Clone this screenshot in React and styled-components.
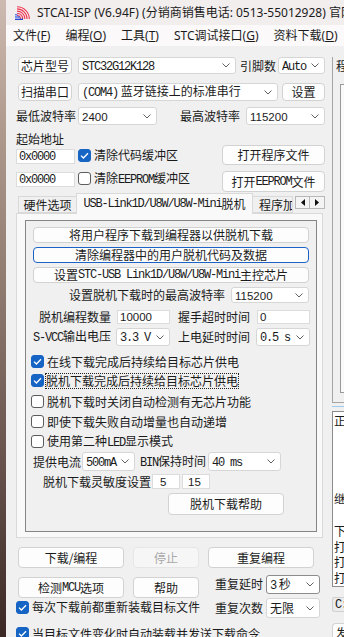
import React from "react";
import styled, { createGlobalStyle } from "styled-components";

const UI = `"Noto Sans", "Noto Sans CJK SC", sans-serif`;
const CJK = `"Noto Sans CJK SC", "Noto Sans", sans-serif`;

const GlobalStyle = createGlobalStyle`
  html, body { margin: 0; padding: 0; }
  body { background: #3a2a26; font-family: ${CJK}; font-size: 12px; color: #1b1b1b; }
  #root { width: 344px; height: 637px; overflow: hidden; }
`;

const Screen = styled.div`
  display: flex;
  width: 344px;
  height: 637px;
  overflow: hidden;
`;

const Desktop = styled.div`
  flex: none;
  width: 6px;
  background: linear-gradient(180deg, #cdbab0 0%, #b09a8e 20%, #8f7a70 45%, #6b5650 70%, #3b2824 100%);
`;

const Win = styled.div`
  flex: 1;
  min-width: 0;
  display: flex;
  flex-direction: column;
  background: #f0f0f0;
  overflow: hidden;
`;

const TitleBar = styled.div`
  flex: none;
  height: 25px;
  display: flex;
  align-items: center;
  gap: 6px;
  padding-left: 8px;
  background: #f3eeee;
  white-space: nowrap;
  overflow: hidden;
  font: 12px/1 ${UI};
  color: #1b1b1b;
`;

const MenuBar = styled.div`
  flex: none;
  height: 21px;
  display: flex;
  align-items: center;
  gap: 15px;
  padding-left: 7px;
  background: #fbf9f9;
  white-space: nowrap;
  overflow: hidden;
  font: 12px/1 ${UI};
  color: #1b1b1b;
`;

const MenuItem = styled.span`
  flex: none;
`;

const Body = styled.div`
  flex: 1;
  display: flex;
  min-height: 0;
`;

const Left = styled.div`
  flex: none;
  width: 326px;
  box-sizing: border-box;
  padding: 0 7px 0 10px;
  display: flex;
  flex-direction: column;
`;

const Right = styled.div`
  flex: 1;
  min-width: 0;
  display: flex;
  flex-direction: column;
  overflow: hidden;
`;

const Row = styled.div`
  flex: none;
  display: flex;
  align-items: ${(p) => p.$align || "center"};
  height: ${(p) => p.$h}px;
  margin-top: ${(p) => p.$mt || 0}px;
`;

const Label = styled.span`
  flex: none;
  font: 12px/14px ${CJK};
  color: #1b1b1b;
  white-space: nowrap;
  margin-left: ${(p) => p.$ml || 0}px;
  margin-top: ${(p) => p.$mt || 0}px;
  width: ${(p) => (p.$w ? p.$w + "px" : "auto")};
  text-align: ${(p) => (p.$right ? "right" : "left")};
  ${(p) => (p.$dotted ? "outline: 1px dotted #222; outline-offset: 0px;" : "")}
`;

const M = styled.span`
  font-family: "Liberation Mono", monospace;
  font-size: 12px;
  letter-spacing: -1.2px;
`;

const N = styled.span`
  font-family: "Liberation Sans", sans-serif;
  font-size: 11.5px;
`;

const Btn = styled.button`
  box-sizing: border-box;
  flex: none;
  width: ${(p) => p.$w}px;
  height: ${(p) => p.$h || 17}px;
  margin: ${(p) => p.$mt || 0}px 0 0 ${(p) => p.$ml || 0}px;
  padding: 0;
  display: flex;
  align-items: center;
  justify-content: center;
  background: ${(p) => (p.disabled ? "#f6f6f6" : "#fdfdfd")};
  border: 1px solid ${(p) => (p.$focus ? "#1b63c6" : p.disabled ? "#e6e6e6" : "#d2d2d2")};
  border-radius: 4px;
  font: 12px/14px ${CJK};
  color: ${(p) => (p.disabled ? "#a8a8a8" : "#1b1b1b")};
  white-space: nowrap;
  overflow: hidden;
`;

const ComboBox = styled.div`
  box-sizing: border-box;
  flex: none;
  display: flex;
  align-items: center;
  width: ${(p) => p.$w}px;
  height: ${(p) => p.$h || 18}px;
  margin-left: ${(p) => p.$ml || 0}px;
  margin-top: ${(p) => p.$mt || 0}px;
  padding-left: 3px;
  background: #fff;
  border: 1px solid ${(p) => (p.$dark ? "#8c8c8c" : "#d6d6d6")};
  border-radius: 3px;
  font: 12px/14px ${CJK};
  color: #1b1b1b;
  white-space: nowrap;
  overflow: hidden;
`;

const ComboText = styled.span`
  flex: 1;
  min-width: 0;
  overflow: hidden;
`;

const ChevronSvg = styled.svg`
  flex: none;
  margin: 0 5px 0 2px;
`;

function Chevron() {
  return (
    <ChevronSvg width="8" height="5" viewBox="0 0 8 5">
      <path d="M.5 .5 4 4 7.5 .5" fill="none" stroke="#606060" strokeWidth="1" />
    </ChevronSvg>
  );
}

function Combo({ children, ...rest }) {
  return (
    <ComboBox {...rest}>
      <ComboText>{children}</ComboText>
      <Chevron />
    </ComboBox>
  );
}

const TextBox = styled.div`
  box-sizing: border-box;
  flex: none;
  display: flex;
  align-items: center;
  width: ${(p) => p.$w}px;
  height: ${(p) => p.$h || 15}px;
  margin-left: ${(p) => p.$ml || 0}px;
  margin-top: ${(p) => p.$mt || 0}px;
  padding-left: ${(p) => (p.$pl != null ? p.$pl : 2)}px;
  background: #fff;
  border: 1px solid #dcdcdc;
  font: 12px/14px ${CJK};
  color: #1b1b1b;
  white-space: nowrap;
  overflow: hidden;
`;

const CheckBox = styled.span`
  box-sizing: border-box;
  flex: none;
  width: 13px;
  height: 13px;
  margin-left: ${(p) => p.$ml || 0}px;
  margin-top: ${(p) => p.$mt || 0}px;
  border-radius: 3px;
  display: flex;
  align-items: center;
  justify-content: center;
  background: ${(p) => (p.$on ? "#1664c4" : "#fff")};
  border: 1px solid ${(p) => (p.$on ? "#1664c4" : "#5c5c5c")};
`;

function Check({ on, ...rest }) {
  return (
    <CheckBox $on={on} {...rest}>
      {on && (
        <svg width="9" height="7" viewBox="0 0 9 7">
          <path d="M1 3.6 3.4 6 8 1.2" fill="none" stroke="#fff" strokeWidth="1.3" />
        </svg>
      )}
    </CheckBox>
  );
}

const TabStrip = styled.div`
  flex: none;
  display: flex;
  align-items: flex-end;
  height: 20px;
  margin-top: 1px;
`;

const Tab = styled.div`
  box-sizing: border-box;
  flex: none;
  width: ${(p) => p.$w}px;
  height: ${(p) => (p.$active ? 21 : 17)}px;
  margin-left: ${(p) => p.$ml || 0}px;
  margin-bottom: ${(p) => (p.$active ? -1 : 0)}px;
  display: flex;
  align-items: center;
  justify-content: ${(p) => (p.$left ? "flex-start" : "center")};
  padding-left: ${(p) => (p.$left ? 6 : 0)}px;
  padding-bottom: ${(p) => (p.$active ? 1 : 0)}px;
  background: ${(p) => (p.$active ? "#f9f9f9" : "#f0f0f0")};
  border: 1px solid #d9d9d9;
  border-bottom: ${(p) => (p.$active ? "none" : "1px solid #d9d9d9")};
  font: 12px/14px ${CJK};
  color: #1b1b1b;
  white-space: nowrap;
  overflow: hidden;
  position: relative;
  z-index: ${(p) => (p.$active ? 1 : 0)};
`;

const ScrollPair = styled.div`
  flex: none;
  display: flex;
  margin-left: auto;
  align-self: flex-start;
  margin-top: 3px;
`;

const ScrollBtn = styled.div`
  box-sizing: border-box;
  width: 15px;
  height: 13px;
  display: flex;
  align-items: center;
  justify-content: center;
  background: #f4f4f4;
  border: 1px solid #b8b8b8;
  & + & {
    border-left: none;
  }
`;

const Panel = styled.div`
  box-sizing: border-box;
  flex: none;
  display: flex;
  width: 307px;
  height: 325px;
  padding: 6px 5px 5px 8px;
  background: #f9f9f9;
  border: 1px solid #d9d9d9;
`;

const Group = styled.div`
  box-sizing: border-box;
  flex: 1;
  display: flex;
  flex-direction: column;
  background: #f0f0f0;
  border: 1px solid #858585;
`;

const Frame = styled.div`
  box-sizing: border-box;
  flex: none;
  height: 346px;
  margin-top: 11px;
  display: flex;
  flex-direction: column;
  border-left: 1px solid #a5a5a5;
  border-bottom: 1px solid #a5a5a5;
`;

const FrameLabel = styled.span`
  font: 12px/14px ${CJK};
  margin: 2px 0 0 3px;
  white-space: nowrap;
`;

const InnerBox = styled.div`
  flex: 1;
  margin: 11px 0 9px 7px;
  background: #fafafa;
  border: 1px solid #9a9a9a;
  border-right: none;
`;

const Splitter = styled.div`
  flex: none;
  height: 1px;
  margin-top: 3px;
  background: #9ccbf0;
`;

const LogArea = styled.div`
  box-sizing: border-box;
  flex: none;
  height: 176px;
  margin-top: 4px;
  padding: 1px 0 0 1px;
  background: #fff;
  border: 1px solid #8c8c8c;
  border-right: none;
  font: 12px/15.7px ${CJK};
  white-space: nowrap;
  overflow: hidden;
`;

const LogLine = styled.div`
  height: 15.7px;
`;

const PathBox = styled.div`
  box-sizing: border-box;
  flex: none;
  height: 15px;
  margin-top: 10px;
  padding-left: 2px;
  display: flex;
  align-items: center;
  background: #ececec;
  border: 1px solid #d0d0d0;
  border-right: none;
  border-radius: 3px 0 0 3px;
`;

const SideBtn = styled.div`
  box-sizing: border-box;
  flex: none;
  height: 20px;
  margin-top: 11px;
  padding-left: 3px;
  display: flex;
  align-items: center;
  background: #fdfdfd;
  border: 1px solid #d2d2d2;
  border-right: none;
  border-radius: 4px 0 0 4px;
  font: 12px/14px ${CJK};
  white-space: nowrap;
  overflow: hidden;
`;

const RightBlock = styled.div`
  flex: none;
  display: flex;
  align-items: ${(p) => p.$align || "center"};
  margin-left: auto;
  margin-right: 5px;
  align-self: stretch;
`;

function AppIcon() {
  return (
    <svg width="17" height="14" viewBox="0 0 17 14" style={{ flex: "none" }}>
      <g fill="none" stroke="#ee3a55" strokeWidth="1.1">
        <path d="M3 9.5 A3.5 3.5 0 0 1 6.5 13" />
        <path d="M3 7.3 A5.7 5.7 0 0 1 8.7 13" />
        <path d="M3 5.1 A7.9 7.9 0 0 1 10.9 13" />
        <path d="M3 2.9 A10.1 10.1 0 0 1 13.1 13" />
        <path d="M3 0.7 A12.3 12.3 0 0 1 15.3 13" />
      </g>
      <path d="M1 13.3 H9" stroke="#1a3fd0" strokeWidth="1.3" />
      <path d="M1 11 H6" stroke="#2a55e0" strokeWidth="1.2" />
      <path d="M1 8.8 H3.5" stroke="#2a55e0" strokeWidth="1.1" />
    </svg>
  );
}

function Tri({ dir }) {
  return (
    <svg width="4" height="7" viewBox="0 0 4 7">
      <path d={dir === "l" ? "M4 0 0 3.5 4 7Z" : "M0 0 4 3.5 0 7Z"} fill="#111" />
    </svg>
  );
}

const logLines = ["正", "", "", "", "", "继", "", "下", "打", "打", "打"];

export default function App() {
  return (
    <>
      <GlobalStyle />
      <Screen>
        <Desktop />
        <Win>
          <TitleBar>
            <AppIcon />
            <span>STCAI-ISP (V6.94F) (分销商销售电话: 0513-55012928) 官网: www.STCAI.com</span>
          </TitleBar>
          <MenuBar>
            <MenuItem>文件(<u>F</u>)</MenuItem>
            <MenuItem>编程(<u>O</u>)</MenuItem>
            <MenuItem>工具(<u>T</u>)</MenuItem>
            <MenuItem>STC调试接口(<u>G</u>)</MenuItem>
            <MenuItem>资料下载(<u>D</u>)</MenuItem>
          </MenuBar>
          <Body>
            <Left>
              <Row $h={17} $mt={11}>
                <Btn $w={54} $h={17} $ml={2}>芯片型号</Btn>
                <Combo $w={158} $h={17} $ml={6}><M>STC32G12K128</M></Combo>
                <Label $ml={4}>引脚数</Label>
                <Combo $w={47} $h={17} $ml={2}><M>Auto</M></Combo>
              </Row>
              <Row $h={18} $mt={9}>
                <Btn $w={54} $h={18} $ml={2}>扫描串口</Btn>
                <Combo $w={200} $h={18} $ml={6}><M>(COM4)</M> 蓝牙链接上的标准串行</Combo>
                <Btn $w={43} $h={18} $ml={4}>设置</Btn>
              </Row>
              <Row $h={18} $mt={6}>
                <Label $w={60}>最低波特率</Label>
                <Combo $w={79} $h={18} $ml={2}><N>2400</N></Combo>
                <Label $ml={23}>最高波特率</Label>
                <Combo $w={79} $h={18} $ml={6}><N>115200</N></Combo>
              </Row>
              <Row $h={12} $mt={8}>
                <Label>起始地址</Label>
              </Row>
              <Row $h={20} $align="flex-start">
                <TextBox $w={59} $h={15} $mt={4}><M>0x0000</M></TextBox>
                <Check on $ml={3} $mt={4} />
                <Label $ml={3} $mt={3}>清除代码缓冲区</Label>
                <RightBlock $align="flex-start">
                  <Btn $w={103} $h={20} style={{ marginRight: -5 }}>打开程序文件</Btn>
                </RightBlock>
              </Row>
              <Row $h={21} $mt={6} $align="flex-start">
                <TextBox $w={59} $h={15} $mt={1}><M>0x0000</M></TextBox>
                <Check $ml={3} $mt={1} />
                <Label $ml={3} $mt={0}>清除<M>EEPROM</M>缓冲区</Label>
                <RightBlock $align="flex-start">
                  <Btn $w={103} $h={21} style={{ marginRight: -5 }}>打开<M>EEPROM</M>文件</Btn>
                </RightBlock>
              </Row>
              <TabStrip>
                <Tab $w={59} $ml={2}>硬件选项</Tab>
                <Tab $w={177} $active style={{ marginLeft: -1 }}><M>USB-Link1D/U8W/U8W-Mini</M>脱机</Tab>
                <Tab $w={41} $left style={{ marginLeft: -1 }}>程序加载</Tab>
                <ScrollPair>
                  <ScrollBtn><Tri dir="l" /></ScrollBtn>
                  <ScrollBtn><Tri dir="r" /></ScrollBtn>
                </ScrollPair>
              </TabStrip>
              <Panel>
                <Group>
                  <Btn $w={276} $h={16} $ml={7} $mt={6}>将用户程序下载到编程器以供脱机下载</Btn>
                  <Btn $w={276} $h={16} $ml={7} $mt={4} $focus>清除编程器中的用户脱机代码及数据</Btn>
                  <Btn $w={276} $h={16} $ml={7} $mt={4}>设置<M>STC-USB Link1D/U8W/U8W-Mini</M>主控芯片</Btn>
                  <Row $h={16} $mt={4}>
                    <Label $w={199} $right>设置脱机下载时的最高波特率</Label>
                    <Combo $w={78} $h={16} $ml={6}><N>115200</N></Combo>
                  </Row>
                  <Row $h={14} $mt={7}>
                    <Label $w={85} $right>脱机编程数量</Label>
                    <TextBox $w={53} $h={14} $ml={6}><N>10000</N></TextBox>
                    <Label $w={72} $ml={8}>握手超时时间</Label>
                    <TextBox $w={53} $h={14} $ml={7}><N>0</N></TextBox>
                  </Row>
                  <Row $h={18} $mt={4}>
                    <Label $w={85} $right><M>S-VCC</M>输出电压</Label>
                    <Combo $w={54} $h={18} $ml={5}><M>3.3 V</M></Combo>
                    <Label $w={72} $ml={8}>上电延时时间</Label>
                    <Combo $w={54} $h={18} $ml={6}><M>0.5 s</M></Combo>
                  </Row>
                  <Row $h={13} $mt={9}>
                    <Check on $ml={5} />
                    <Label $ml={3}>在线下载完成后持续给目标芯片供电</Label>
                  </Row>
                  <Row $h={13} $mt={6}>
                    <Check on $ml={5} />
                    <Label $ml={2} $dotted>脱机下载完成后持续给目标芯片供电</Label>
                  </Row>
                  <Row $h={13} $mt={8}>
                    <Check $ml={5} />
                    <Label $ml={3}>脱机下载时关闭自动检测有无芯片功能</Label>
                  </Row>
                  <Row $h={13} $mt={7}>
                    <Check $ml={5} />
                    <Label $ml={3}>即使下载失败自动增量也自动递增</Label>
                  </Row>
                  <Row $h={13} $mt={7}>
                    <Check $ml={5} />
                    <Label $ml={3}>使用第二种<M>LED</M>显示模式</Label>
                  </Row>
                  <Row $h={19} $mt={4}>
                    <Label $w={48} $ml={7}>提供电流</Label>
                    <Combo $w={53} $h={19} $ml={1}><M>500mA</M></Combo>
                    <Label $ml={5}><M>BIN</M>保持时间</Label>
                    <Combo $w={73} $h={19} $ml={2}><M>40 ms</M></Combo>
                  </Row>
                  <Row $h={15} $mt={3}>
                    <Label $w={108} $ml={17}>脱机下载灵敏度设置</Label>
                    <TextBox $w={28} $h={15} $ml={1} $pl={7}><N>5</N></TextBox>
                    <TextBox $w={28} $h={15} $ml={2} $pl={5}><N>15</N></TextBox>
                  </Row>
                  <Btn $w={116} $h={22} $ml={142} $mt={4}>脱机下载帮助</Btn>
                </Group>
              </Panel>
              <Row $h={21} $mt={9}>
                <Btn $w={106} $h={21} $ml={2}>下载/编程</Btn>
                <Btn $w={66} $h={21} $ml={9} disabled>停止</Btn>
                <Btn $w={106} $h={21} $ml={9}>重复编程</Btn>
              </Row>
              <Row $h={23} $mt={7} $align="flex-start">
                <Btn $w={106} $h={21} $ml={2} $mt={2}>检测<M>MCU</M>选项</Btn>
                <Btn $w={66} $h={21} $ml={9} $mt={2}>帮助</Btn>
                <RightBlock $align="flex-start">
                  <Label $w={48} $mt={2}>重复延时</Label>
                  <Combo $w={54} $h={19} $ml={3} $dark><M>3</M> 秒</Combo>
                </RightBlock>
              </Row>
              <Row $h={20} $align="flex-start">
                <Check on $mt={3} />
                <Label $ml={3} $mt={2}>每次下载前都重新装载目标文件</Label>
                <RightBlock $align="flex-start">
                  <Label $w={48} $mt={3}>重复次数</Label>
                  <Combo $w={54} $h={20} $ml={3}>无限</Combo>
                </RightBlock>
              </Row>
              <Row $h={13} $mt={9}>
                <Check on />
                <Label $ml={3}>当目标文件变化时自动装载并发送下载命令</Label>
              </Row>
            </Left>
            <Right>
              <Frame>
                <FrameLabel>程序文件</FrameLabel>
                <InnerBox />
              </Frame>
              <Splitter />
              <LogArea>
                {logLines.map((t, i) => (
                  <LogLine key={i}>{t}</LogLine>
                ))}
              </LogArea>
              <PathBox><M>C:</M></PathBox>
              <SideBtn>发送</SideBtn>
            </Right>
          </Body>
        </Win>
      </Screen>
    </>
  );
}
